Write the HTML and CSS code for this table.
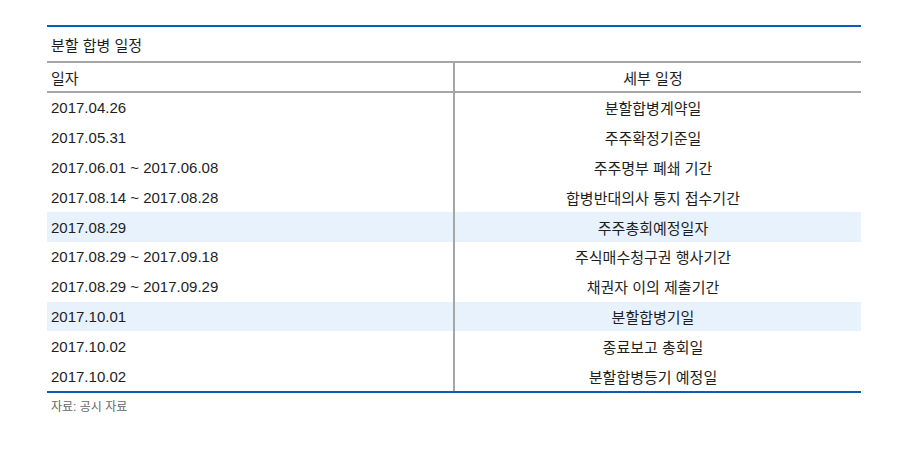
FILE: index.html
```html
<!DOCTYPE html>
<html lang="ko">
<head>
<meta charset="utf-8">
<link rel="stylesheet" href="styles.css">
</head>
<body>
<div class="wrap">
  <div class="title">분할 합병 일정</div>
  <div class="grid">
    <div class="hd c1">일자</div><div class="hd c2">세부 일정</div>
    <div class="c1">2017.04.26</div><div class="c2">분할합병계약일</div>
    <div class="c1">2017.05.31</div><div class="c2">주주확정기준일</div>
    <div class="c1">2017.06.01 ~ 2017.06.08</div><div class="c2">주주명부 폐쇄 기간</div>
    <div class="c1">2017.08.14 ~ 2017.08.28</div><div class="c2">합병반대의사 통지 접수기간</div>
    <div class="c1 hl">2017.08.29</div><div class="c2 hl">주주총회예정일자</div>
    <div class="c1">2017.08.29 ~ 2017.09.18</div><div class="c2">주식매수청구권 행사기간</div>
    <div class="c1">2017.08.29 ~ 2017.09.29</div><div class="c2">채권자 이의 제출기간</div>
    <div class="c1 hl">2017.10.01</div><div class="c2 hl">분할합병기일</div>
    <div class="c1">2017.10.02</div><div class="c2">종료보고 총회일</div>
    <div class="c1">2017.10.02</div><div class="c2">분할합병등기 예정일</div>
  </div>
  <div class="src">자료: 공시 자료</div>
</div>
</body>
</html>
```
FILE: styles.css
```css
body {
  margin: 0;
  padding: 25px 0 0 47px;
  background: #fff;
  font-family: "Liberation Sans", "Noto Sans CJK KR", sans-serif;
  color: #1e1e1e;
}
.wrap {
  width: 814px;
}
.title {
  border-top: 2px solid #0a5fb4;
  border-bottom: 2px solid #a6a6a6;
  height: 38px;
  box-sizing: border-box;
  display: flex;
  align-items: center;
  padding-left: 4px;
  font-size: 15px;
}
.grid {
  display: grid;
  grid-template-columns: 408px 406px;
  grid-auto-rows: 29.8px;
  grid-template-rows: 30px;
  border-bottom: 2px solid #0a5fb4;
  font-size: 15px;
}
.grid > div {
  display: flex;
  align-items: center;
  box-sizing: border-box;
  white-space: nowrap;
}
.c1 {
  border-right: 2px solid #a6a6a6;
  padding-left: 4px;
}
.c2 {
  justify-content: center;
  padding-right: 10px;
}
.hd {
  border-bottom: 2px solid #a6a6a6;
}
.hl {
  background: #e8f2fd;
}
.src {
  font-size: 12px;
  color: #666;
  padding: 4px 0 0 4px;
}
```
